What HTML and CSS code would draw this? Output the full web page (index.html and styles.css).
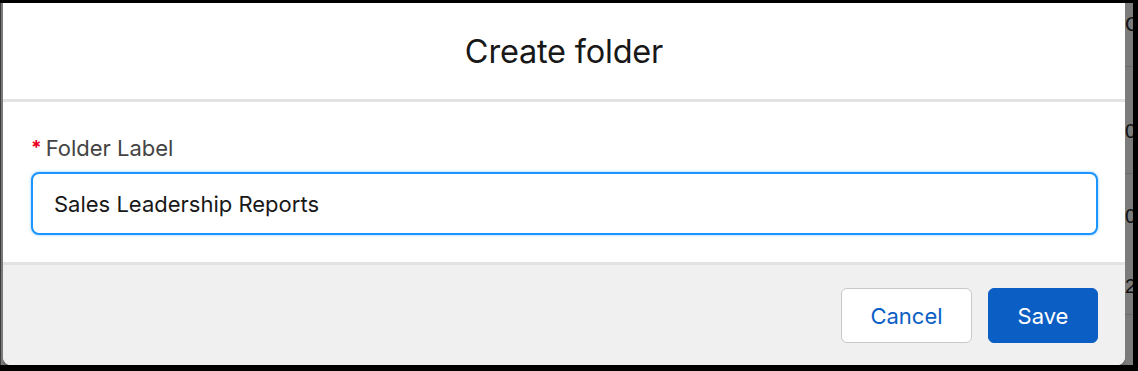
FILE: index.html
```html
<!DOCTYPE html>
<html lang="en">
<head>
<meta charset="utf-8">
<title>Create folder</title>
<link rel="stylesheet" href="styles.css">
</head>
<body>
<div class="screen">
  <div class="backdrop">
    <div class="edge-left"></div>
    <div class="modal">
      <header class="modal-header">
        <h2 class="modal-title">Create folder</h2>
      </header>
      <div class="modal-body">
        <label class="field-label" for="folder-label"><abbr class="required" title="required">*</abbr>Folder Label</label>
        <input class="field-input" id="folder-label" type="text" value="Sales Leadership Reports">
      </div>
      <footer class="modal-footer">
        <button class="btn btn-neutral" type="button">Cancel</button>
        <button class="btn btn-brand" type="button">Save</button>
      </footer>
    </div>
    <div class="edge-right">
      <div class="peek peek-1">C</div>
      <div class="peek-line peek-l1"></div>
      <div class="peek peek-2">0</div>
      <div class="peek-line peek-l2"></div>
      <div class="peek peek-3">0</div>
      <div class="peek peek-4">2</div>
      <div class="peek-line peek-l3"></div>
    </div>
  </div>
</div>
</body>
</html>
```

FILE: styles.css
```css
* { box-sizing: border-box; }

html, body {
  margin: 0;
  padding: 0;
  background: #000;
  height: 100%;
}

body {
  font-family: Inter, "Noto Sans", "Liberation Sans", sans-serif;
  color: #181818;
}

.screen {
  width: 1138px;
  height: 371px;
  padding: 3px 5px 6px 0;
  background: #000;
}

.backdrop {
  display: flex;
  height: 100%;
  background: #6f6f6f;
}

.edge-left {
  width: 3px;
  flex: none;
  background: linear-gradient(to right, #3c3c3c 0, #3c3c3c 1px, #7a7a7a 1px);
}

.edge-right {
  width: 8px;
  flex: none;
  background: #7b7b7b;
  overflow: hidden;
  display: flex;
  flex-direction: column;
}

.peek {
  font-size: 20px;
  line-height: 20px;
  height: 20px;
  color: #111;
  font-family: "Liberation Sans", sans-serif;
}

.peek-1 { margin-top: 11px; }
.peek-line { height: 1px; background: #6a6a6a; }
.peek-l1 { margin-top: 32px; }
.peek-2 { margin-top: 54px; }
.peek-l2 { margin-top: 32px; }
.peek-3 { margin-top: 32px; }
.peek-4 { margin-top: 50px; }
.peek-l3 { margin-top: 18px; }

.modal {
  flex: 1;
  display: flex;
  flex-direction: column;
  background: #fff;
  border-radius: 0 0 8px 8px;
  overflow: hidden;
}

.modal-header {
  height: 99px;
  flex: none;
  display: flex;
  align-items: center;
  justify-content: center;
  border-bottom: 3px solid #e3e3e3;
}

.modal-title {
  margin: 0;
  font-size: 32.5px;
  font-weight: 400;
  color: #181818;
  letter-spacing: -0.2px;
}

.modal-body {
  flex: 1;
  padding: 32px 27px 0 28px;
  display: flex;
  flex-direction: column;
}

.field-label {
  display: flex;
  align-items: baseline;
  font-size: 22px;
  line-height: 28px;
  color: #444;
  margin-bottom: 8px;
}

.required {
  color: #ea001e;
  text-decoration: none;
  border: 0;
  font-size: 19px;
  font-weight: 700;
  margin: 0 4px 0 0;
  position: relative;
  top: -2px;
}

.field-input {
  height: 63px;
  width: 100%;
  border: 2px solid #1b96ff;
  border-radius: 8px;
  box-shadow: 0 0 3px #8cc6ff;
  padding: 0 21px;
  font-family: inherit;
  font-size: 22px;
  color: #181818;
  background: #fff;
  outline: none;
}

.modal-footer {
  height: 103px;
  flex: none;
  border-top: 3px solid #e3e3e3;
  background: #f0f0f0;
  display: flex;
  justify-content: flex-end;
  align-items: flex-start;
  gap: 16px;
  padding: 23px 27px 0 0;
}

.btn {
  height: 55px;
  border-radius: 6px;
  font-family: inherit;
  font-size: 22px;
  cursor: pointer;
}

.btn-neutral {
  width: 131px;
  background: #fff;
  border: 1px solid #c9c9c9;
  color: #0b5ec4;
}

.btn-brand {
  width: 110px;
  background: #0b5ec4;
  border: 1px solid #0b5ec4;
  color: #fff;
}
```
